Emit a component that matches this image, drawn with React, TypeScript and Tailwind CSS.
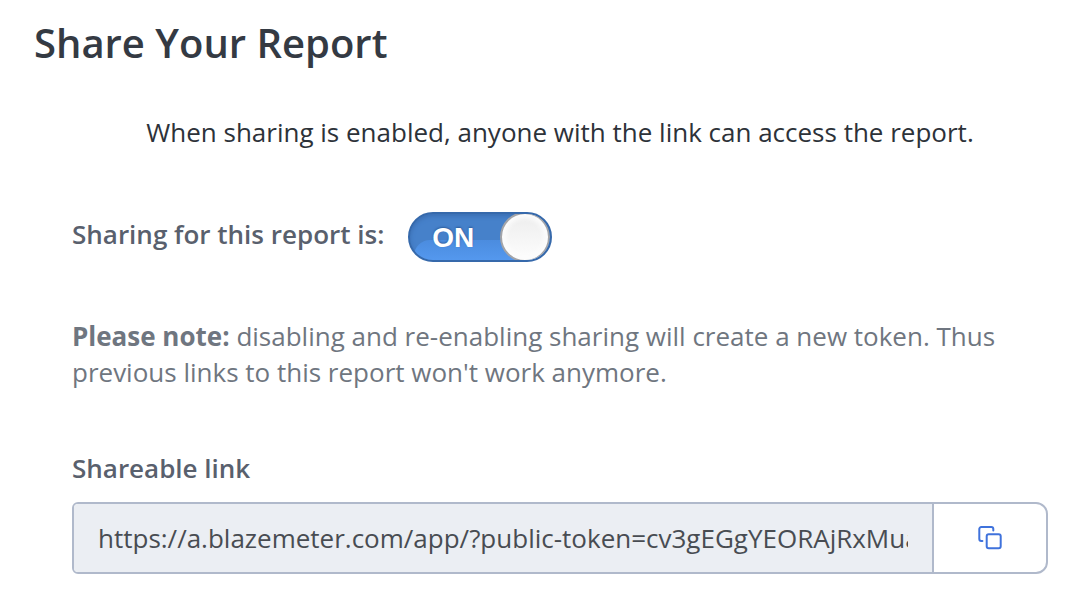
import { useState } from "react";

const shareUrl =
  "https://a.blazemeter.com/app/?public-token=cv3gEGgYEORAjRxMuaT0bq7sWn2LkP9d";

function CopyIcon() {
  return (
    <svg
      width="26"
      height="26"
      viewBox="0 0 26 26"
      fill="none"
      stroke="#3f72dc"
      strokeWidth="2"
      strokeLinecap="round"
      strokeLinejoin="round"
      aria-hidden
    >
      <rect x="9.7" y="9.2" width="14" height="14" rx="2" />
      <path d="M5.4 16H4.3a2 2 0 0 1-2-2V4a2 2 0 0 1 2-2h10a2 2 0 0 1 2 2v1.4" />
    </svg>
  );
}

export default function App() {
  const [enabled, setEnabled] = useState(true);

  async function copyLink() {
    await navigator.clipboard.writeText(shareUrl);
  }

  return (
    <main className="min-h-screen bg-white pt-5 pr-7 pb-6 pl-[34px] font-['Open_Sans',sans-serif] text-[26px] leading-9 text-[#2d3239]">
      <h1 className="text-[40px] leading-[46px] font-semibold text-[#343a43]">Share Your Report</h1>

      <p className="mt-12 pl-[38px] text-center">
        When sharing is enabled, anyone with the link can access the report.
      </p>

      <div className="pl-[38px]">
        <div className="mt-[62px] flex items-start gap-6">
          <label htmlFor="sharing" className="mt-1 font-semibold text-[#59606d]">
            Sharing for this report is:
          </label>
          <button
            id="sharing"
            type="button"
            role="switch"
            aria-checked={enabled}
            onClick={() => setEnabled(!enabled)}
            className={`relative flex h-[50px] w-36 items-center justify-between overflow-hidden rounded-full border-2 font-['Liberation_Sans',sans-serif] text-[28px] font-bold text-white ${
              enabled
                ? "border-[#3669ab] bg-[#4681ca] pl-[22px] shadow-[inset_0_2px_4px_#3b6eb2]"
                : "flex-row-reverse border-gray-400 bg-gray-400 pr-5"
            }`}
          >
            {enabled && (
              <span className="absolute right-0 bottom-0 left-1 h-5 rounded-tl-2xl bg-linear-to-b from-[#4b8cdf] to-[#5498ee]" />
            )}
            <span className="relative mt-0.5 [text-shadow:0_-1px_2px_#2c5c9c]">
              {enabled ? "ON" : "OFF"}
            </span>
            <span className="relative size-[50px] shrink-0 rounded-full border-2 border-[#a3a4a8] bg-linear-to-b from-[#ededed] to-[#fdfdfd] shadow-[inset_0_0_4px_4px_#fcfcfc]" />
          </button>
        </div>

        <p className="mt-14 text-[#6f7680]">
          <strong className="font-bold">Please note:</strong> disabling and re-enabling sharing
          will create a new token. Thus previous links to this report won't work anymore.
        </p>

        <label htmlFor="link" className="mt-[60px] block font-semibold text-[#59606d]">
          Shareable link
        </label>
        <div className="mt-4 flex h-[72px] overflow-hidden rounded-l-md rounded-r-xl border-2 border-[#b0b9cb]">
          <div className="min-w-0 flex-1 bg-[#ebeef3] px-6">
            <input
              id="link"
              readOnly
              value={shareUrl}
              className="h-full w-full bg-transparent text-[#484c52] outline-none"
            />
          </div>
          <button
            type="button"
            aria-label="Copy link"
            onClick={copyLink}
            className="flex w-[114px] items-center justify-center border-l-2 border-[#b0b9cb]"
          >
            <CopyIcon />
          </button>
        </div>
      </div>
    </main>
  );
}
